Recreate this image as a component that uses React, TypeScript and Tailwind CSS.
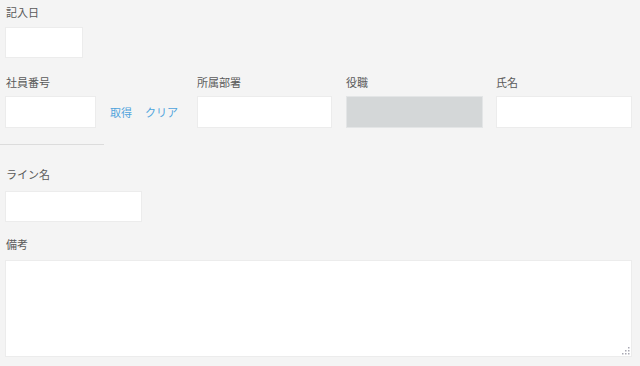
import React from 'react';

const font = { fontFamily: '"Noto Sans CJK JP", "Liberation Sans", sans-serif' };

const Label = ({ children }: { children: React.ReactNode }) => (
  <div className="text-[11px] leading-[16px] text-[#5a5a5a]">{children}</div>
);

const Box = ({ className = '' }: { className?: string }) => (
  <div className={`h-[31px] border border-[#ececec] bg-white ${className}`} />
);

export default function App() {
  return (
    <div className="w-[640px] h-[366px] overflow-hidden bg-[#f4f4f4]" style={font}>
      <div className="pl-[5px] pt-[4px]">
        <div className="pl-[1px]">
          <Label>記入日</Label>
        </div>
        <Box className="mt-[7px] w-[78px]" />

        <div className="mt-[16px] flex">
          <div className="w-[178px]">
            <div className="pl-[1px]">
              <Label>社員番号</Label>
            </div>
            <div className="mt-[6px] flex items-center">
              <Box className="w-[91px] h-[32px]" />
              <a className="ml-[14px] text-[11px] text-[#4fa3dc] cursor-pointer">取得</a>
              <a className="ml-[13px] text-[11px] text-[#4fa3dc] cursor-pointer">クリア</a>
            </div>
          </div>
          <div className="ml-[14px] w-[135px]">
            <Label>所属部署</Label>
            <Box className="mt-[6px] h-[32px]" />
          </div>
          <div className="ml-[14px] w-[137px]">
            <Label>役職</Label>
            <div className="mt-[6px] h-[32px] border border-[#e3e5e6] bg-[#d4d7d8]" />
          </div>
          <div className="ml-[13px] w-[136px]">
            <Label>氏名</Label>
            <Box className="mt-[6px] h-[32px]" />
          </div>
        </div>
      </div>

      <div className="mt-[16px] h-px w-[104px] bg-[#dcdcdc]" />

      <div className="pl-[5px]">
        <div className="mt-[21px] pl-[1px]">
          <Label>ライン名</Label>
        </div>
        <Box className="mt-[9px] w-[137px] h-[31px]" />

        <div className="mt-[14px] pl-[1px]">
          <Label>備考</Label>
        </div>
        <div className="relative mt-[8px] w-[627px] h-[97px] border border-[#ececec] bg-white">
          <svg className="absolute right-[1px] bottom-[1px]" width="9" height="9" viewBox="0 0 9 9">
            {[
              [7, 1],
              [4, 4],
              [7, 4],
              [1, 7],
              [4, 7],
              [7, 7],
            ].map(([x, y], i) => (
              <rect key={i} x={x} y={y} width="1.5" height="1.5" fill="#a9a9b4" />
            ))}
          </svg>
        </div>
      </div>
    </div>
  );
}
